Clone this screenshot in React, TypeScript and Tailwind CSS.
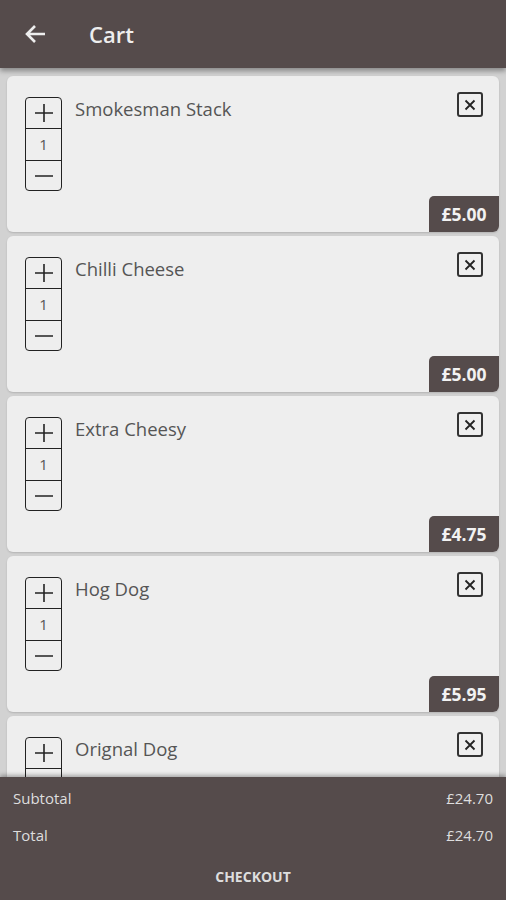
import React from "react";

type CartItem = {
  name: string;
  qty: number;
  price: string;
};

const items: CartItem[] = [
  { name: "Smokesman Stack", qty: 1, price: "£5.00" },
  { name: "Chilli Cheese", qty: 1, price: "£5.00" },
  { name: "Extra Cheesy", qty: 1, price: "£4.75" },
  { name: "Hog Dog", qty: 1, price: "£5.95" },
  { name: "Orignal Dog", qty: 1, price: "£5.00" },
];

const font = { fontFamily: '"Open Sans", "Noto Sans", sans-serif' };

const Stepper: React.FC<{ qty: number }> = ({ qty }) => (
  <div className="flex flex-col self-start w-[37px] shrink-0 border-[1.5px] border-[#222] rounded-[4px] overflow-hidden">
    <div className="flex items-center justify-center h-[31px] border-b-[1.5px] border-[#222]">
      <svg width="20" height="20" viewBox="0 0 20 20">
        <path d="M10 1v18M1 10h18" stroke="#222" strokeWidth="1.6" />
      </svg>
    </div>
    <div className="flex items-center justify-center h-[32px] border-b-[1.5px] border-[#222] text-[15px] text-[#555]">
      {qty}
    </div>
    <div className="flex items-center justify-center h-[29px]">
      <svg width="20" height="4" viewBox="0 0 20 4">
        <path d="M1 2h18" stroke="#222" strokeWidth="1.6" />
      </svg>
    </div>
  </div>
);

const CartCard: React.FC<{ item: CartItem }> = ({ item }) => (
  <div className="relative flex h-[156px] shrink-0 bg-[#eeeeee] rounded-[6px] shadow-[0_1px_2px_rgba(0,0,0,0.15)] pl-[18px] pt-[21px]">
    <Stepper qty={item.qty} />
    <div className="ml-[13px] mt-[1px] text-[18.5px] leading-[22px] text-[#555]">{item.name}</div>
    <button className="absolute top-[16px] right-[16px] flex items-center justify-center w-[26px] h-[25px] border-2 border-[#333] rounded-[3px]">
      <svg width="12" height="12" viewBox="0 0 12 12">
        <path d="M1.5 1.5l9 9M10.5 1.5l-9 9" stroke="#222" strokeWidth="1.8" />
      </svg>
    </button>
    <div className="absolute right-0 bottom-0 flex items-center justify-center w-[70px] h-[36px] bg-[#554b4b] rounded-tl-[5px] rounded-br-[6px] text-[17.5px] font-bold text-[#f2f2f2]">
      {item.price}
    </div>
  </div>
);

const App: React.FC = () => {
  return (
    <div className="flex flex-col w-[506px] h-[900px] bg-[#d2d2d2] overflow-hidden" style={font}>
      <header className="flex items-center h-[68px] shrink-0 bg-[#554b4b] shadow-[0_3px_5px_rgba(0,0,0,0.35)] z-10">
        <svg className="ml-[24px]" width="22" height="20" viewBox="0 0 22 20">
          <path d="M21 10H3M11 2L3 10l8 8" stroke="#eee" strokeWidth="2.6" fill="none" />
        </svg>
        <h1 className="ml-[43px] text-[22px] font-semibold text-[#eeeeee]">Cart</h1>
      </header>

      <div className="flex flex-col flex-1 min-h-0 gap-[4px] px-[7px] pt-[8px] overflow-hidden">
        {items.map((item) => (
          <CartCard key={item.name} item={item} />
        ))}
      </div>

      <footer className="flex flex-col h-[123px] shrink-0 bg-[#554b4b] text-[#dedede] shadow-[0_-2px_4px_rgba(0,0,0,0.3)] z-10">
        <div className="flex items-center justify-between h-[40px] px-[13px] pt-[2px] text-[15px]">
          <span>Subtotal</span>
          <span>£24.70</span>
        </div>
        <div className="flex items-center justify-between h-[36px] px-[13px] text-[15px]">
          <span>Total</span>
          <span>£24.70</span>
        </div>
        <button className="flex items-center justify-center flex-1 text-[14px] font-bold text-[#dedede]">
          CHECKOUT
        </button>
      </footer>
    </div>
  );
};

export default App;
